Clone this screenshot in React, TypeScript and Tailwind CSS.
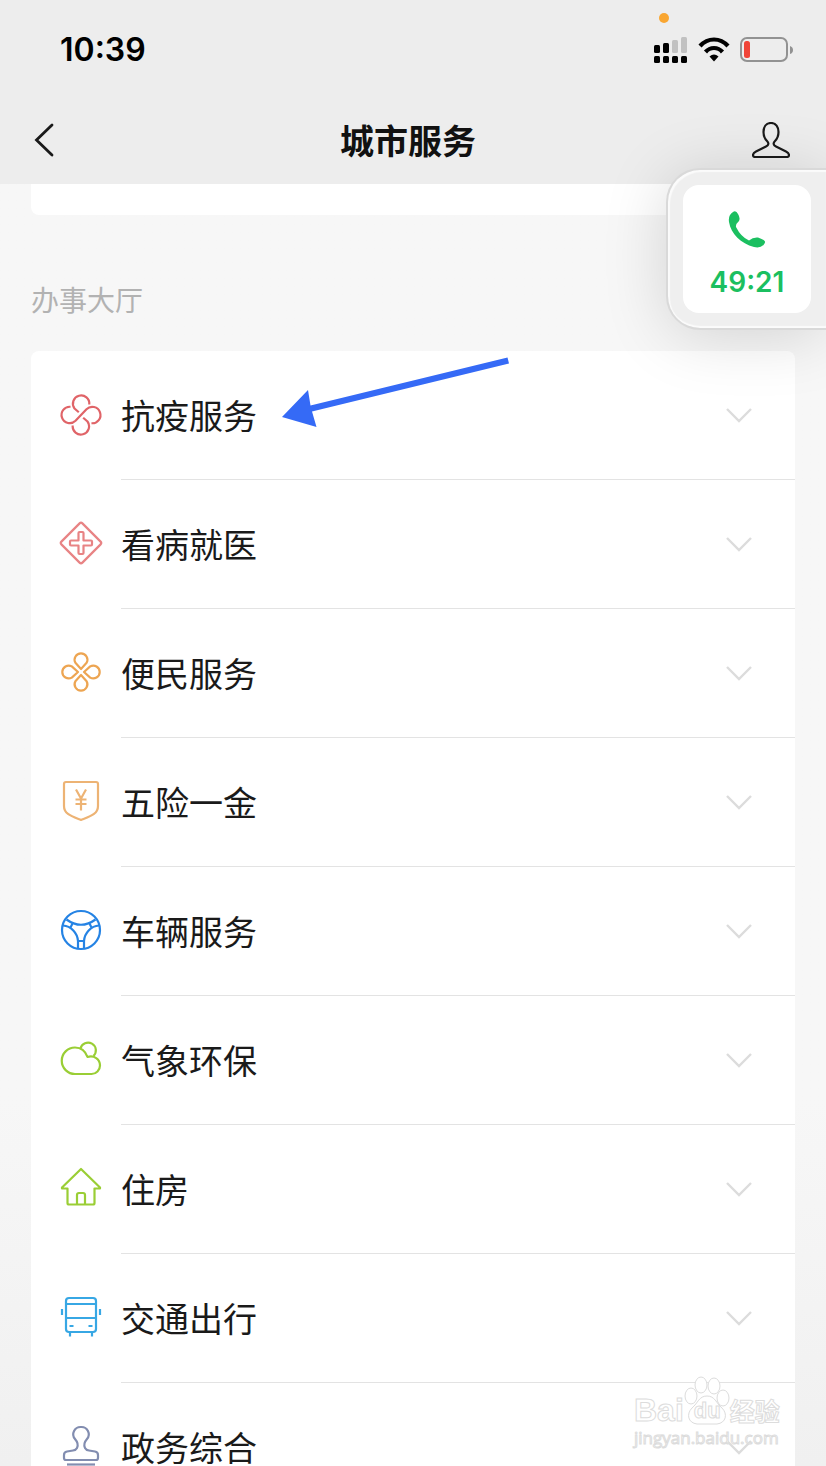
import type { ReactNode } from "react";

type Service = {
    name: string;
    color: string;
    icon: ReactNode;
};

const services: Service[] = [
    {
        name: "抗疫服务",
        color: "text-[#e06468]",
        icon: (
            <>
                <path d="M30.3 12.5A8.2 8.2 0 1 0 15.5 16.5L19.8 20.3" />
                <path d="M11.5 14.8A8.2 8.2 0 1 0 16.5 28.8L27.5 17.2A8.2 8.2 0 1 1 32.5 31.2" />
                <path d="M13.7 33.5A8.2 8.2 0 1 0 28.5 29.5L24.2 25.7" />
            </>
        ),
    },
    {
        name: "看病就医",
        color: "text-[#e88384]",
        icon: (
            <>
                <path d="M20.6 2.4Q22 1 23.4 2.4L41.6 20.6Q43 22 41.6 23.4L23.4 41.6Q22 43 20.6 41.6L2.4 23.4Q1 22 2.4 20.6Z" />
                <path d="M20.5 11h3q1 0 1 1v7.5h7.5q1 0 1 1v3q0 1-1 1h-7.5v7.5q0 1-1 1h-3q-1 0-1-1v-7.5h-7.5q-1 0-1-1v-3q0-1 1-1h7.5v-7.5q0-1 1-1Z" />
            </>
        ),
    },
    {
        name: "便民服务",
        color: "text-[#eda552]",
        icon: (
            <>
                <path d="M22 19L16.4 12.8A6.4 6.4 0 1 1 27.6 12.8Z" />
                <path d="M22 25L16.4 31.2A6.4 6.4 0 1 0 27.6 31.2Z" />
                <path d="M19 22L12.8 16.4A6.4 6.4 0 1 0 12.8 27.6Z" />
                <path d="M25 22L31.2 16.4A6.4 6.4 0 1 1 31.2 27.6Z" />
            </>
        ),
    },
    {
        name: "五险一金",
        color: "text-[#edb374]",
        icon: (
            <>
                <path d="M7 3H37Q39 3 39 5V27C39 35 32 37 22 41C12 37 5 35 5 27V5Q5 3 7 3Z" />
                <path d="M17 10.5L22 19.5L27 10.5M22 19.5V31.5M16.5 20.5H27.5M16.5 25H27.5" />
            </>
        ),
    },
    {
        name: "车辆服务",
        color: "text-[#2583e4]",
        icon: (
            <>
                <circle cx="22" cy="22" r="19" />
                <path d="M7.5 11.5Q22 22 36.5 11.5" />
                <path d="M4 17.5C12 18 18.5 25 19 33V40.5M40 17.5C32 18 25.5 25 25 33V40.5" />
                <path d="M14 14.5L11.5 19.5M30 14.5L32.5 19.5M19 33h6" />
            </>
        ),
    },
    {
        name: "气象环保",
        color: "text-[#9ace35]",
        icon: (
            <>
                <path d="M16 37H32.5A8.5 8.5 0 0 0 41 28.5C41 22 35 18 28.5 20C26 13 21 10.5 16 10.5A13.25 13.25 0 0 0 16 37Z" />
                <path d="M21.5 11.5A7.8 7.8 0 1 1 34.5 19" />
            </>
        ),
    },
    {
        name: "住房",
        color: "text-[#9ace35]",
        icon: (
            <>
                <path d="M22 3L41 21.5V22.5H35.5V37Q35.5 38.5 34 38.5H10Q8.5 38.5 8.5 37V22.5H3V21.5Z" />
                <path d="M18 38.5V29Q18 27 20 27H24Q26 27 26 29V38.5" />
            </>
        ),
    },
    {
        name: "交通出行",
        color: "text-[#37a7e4]",
        icon: (
            <>
                <rect x="7" y="3" width="30" height="34" rx="3" />
                <path d="M7 9h30M7 23h30M10.5 31h4M29.5 31h4M11 37v4.5M33 37v4.5M3 14v6M41 14v6" />
            </>
        ),
    },
    {
        name: "政务综合",
        color: "text-[#828db0]",
        icon: (
            <>
                <path d="M22 3A7.3 7.3 0 0 0 16 15C19 18.5 19 22 18 24Q17 26 14 26.5L8 27.5Q5 28 5 31V34Q5 36 7 36H37Q39 36 39 34V31Q39 28 36 27.5L30 26.5Q27 26 26 24C25 22 25 18.5 28 15A7.3 7.3 0 0 0 22 3Z" />
                <path d="M8 40.5H36" />
            </>
        ),
    },
];

function StatusBar() {
    return (
        <div className="relative flex h-[100px] items-center justify-between pl-[60px] pr-[33px]">
            <time className="font-['Inter'] text-[32px] font-semibold leading-10 text-black">10:39</time>
            <div className="flex items-center gap-2.5">
                <svg width="34" height="26" viewBox="0 0 34 26" aria-hidden="true">
                    <g fill="#c1c1c1">
                        <rect x="18" y="3" width="6" height="13" rx="1.5" />
                        <rect x="27" y="0" width="6" height="16" rx="1.5" />
                    </g>
                    <g fill="#000">
                        <rect x="0" y="8" width="6" height="8" rx="1.5" />
                        <rect x="9" y="6" width="6" height="10" rx="1.5" />
                        <rect x="0" y="19" width="6" height="7" rx="1.5" />
                        <rect x="9" y="19" width="6" height="7" rx="1.5" />
                        <rect x="18" y="19" width="6" height="7" rx="1.5" />
                        <rect x="27" y="19" width="6" height="7" rx="1.5" />
                    </g>
                </svg>
                <svg width="32" height="26" viewBox="0 0 32 26" fill="none" stroke="#000" strokeWidth="4.2" aria-hidden="true">
                    <path d="M2 9Q8 2.5 16 2.5T30 9" />
                    <path d="M7.5 15Q11 11 16 11T24.5 15" />
                    <path d="M11.5 19.5Q16 15.5 20.5 19.5L16 24.5Z" fill="#000" stroke="none" />
                </svg>
                <svg width="53" height="26" viewBox="0 0 53 26" aria-hidden="true">
                    <rect x="1" y="1" width="46" height="23" rx="6" fill="none" stroke="#929292" strokeWidth="2" />
                    <rect x="4" y="4" width="6" height="17" rx="2.5" fill="#f04438" />
                    <path d="M50 9Q53 10 53 13T50 17Z" fill="#929292" />
                </svg>
            </div>
            <span className="absolute right-[157px] top-[13px] size-[10px] rounded-full bg-[#f9a631]" />
        </div>
    );
}

function NavBar() {
    return (
        <div className="flex h-[84px] items-center justify-between pb-1 pl-8 pr-9">
            <button type="button" aria-label="返回">
                <svg width="32" height="36" viewBox="0 0 32 36" fill="none" stroke="#1a1a1a" strokeWidth="2.8" strokeLinecap="round">
                    <path d="M20 3L4.5 18L20 33" />
                </svg>
            </button>
            <h1 className="text-[34px] font-bold leading-10 text-[#111]">城市服务</h1>
            <button type="button" aria-label="我的">
                <svg width="38" height="36" viewBox="0 0 38 36" fill="none" stroke="#1a1a1a" strokeWidth="2.2" strokeLinejoin="round">
                    <path d="M19 1C14 1 11.5 5 11.5 10C11.5 14 13 17 15 19C17 21 17 23 14 24.5L4 29.5C2 30.5 1 31.5 1 33Q1 35 3 35H35Q37 35 37 33C37 31.5 36 30.5 34 29.5L24 24.5C21 23 21 21 23 19C25 17 26.5 14 26.5 10C26.5 5 24 1 19 1Z" />
                </svg>
            </button>
        </div>
    );
}

function ServiceRow({ name, color, icon }: Service) {
    return (
        <li>
            <button type="button" className="flex h-[129px] w-full items-start gap-[18px] pl-7 text-left">
                <svg
                    className={`mt-[41px] shrink-0 ${color}`}
                    width="44"
                    height="44"
                    viewBox="0 0 44 44"
                    fill="none"
                    stroke="currentColor"
                    strokeWidth="2.2"
                    strokeLinejoin="round"
                    aria-hidden="true"
                >
                    {icon}
                </svg>
                <span className="flex h-full flex-1 items-center justify-between border-b border-[#e3e3e3] pr-[42px]">
                    <span className="text-[34px] leading-9 text-[#1a1a1a]">{name}</span>
                    <svg width="28" height="16" viewBox="0 0 28 16" fill="none" stroke="#dcdcdc" strokeWidth="2.4" aria-hidden="true">
                        <path d="M2 2L14 14L26 2" />
                    </svg>
                </span>
            </button>
        </li>
    );
}

function PointerArrow() {
    return (
        <svg className="pointer-events-none absolute left-[250px] top-[5px]" width="230" height="74" viewBox="0 0 230 74" aria-hidden="true">
            <path d="M1 61L27 34L29.5 49.5L226.5 1.5L228 7.5L31 55.5L35.5 71Z" fill="#356af6" />
        </svg>
    );
}

function CallBubble() {
    return (
        <div className="absolute right-0 top-[168px] rounded-l-[34px] border-2 border-r-0 border-[#d9d9d9] bg-[#efefef] p-[15px] shadow-[0_6px_64px_rgba(0,0,0,0.15),inset_2px_2px_1px_#fbfbfb,inset_0_-2px_1px_#fbfbfb]">
            <button type="button" className="flex size-32 flex-col items-center rounded-[16px] bg-white pt-[26px]">
                <svg width="38" height="38" viewBox="0 0 38 38" fill="#1bbf60" aria-hidden="true">
                    <path d="M5 1Q8 -1 10 3Q12.5 7 11 10Q7.5 13 8 16Q13 26 21 29.5Q25 26 30 26.5Q36 28.5 37 30.5Q37.5 31.5 35.5 34Q32 37.5 26 36C13 32.5 3 23 1 11Q0 4 5 1Z" />
                </svg>
                <span className="mt-[13px] font-['Inter'] text-[28px] font-semibold leading-10 text-[#1bbf60]">49:21</span>
            </button>
        </div>
    );
}

function Watermark() {
    return (
        <div className="pointer-events-none absolute bottom-[16px] right-[44px] w-[148px] font-['Liberation_Sans'] font-bold text-white [-webkit-text-stroke:1px_#dcdcdc]">
            <div className="flex items-end">
                <span className="text-[32px] leading-8">Bai</span>
                <span className="relative">
                    <svg width="46" height="50" viewBox="0 0 46 50" fill="#fff" stroke="#dcdcdc" aria-hidden="true">
                        <ellipse cx="7" cy="20" rx="6" ry="8" />
                        <ellipse cx="17" cy="9" rx="6" ry="8" />
                        <ellipse cx="30" cy="10" rx="6" ry="8" />
                        <ellipse cx="39" cy="22" rx="6" ry="8" />
                        <path d="M23 20C15 20 14 27 8 32C2 38 4 47 13 48H33C42 47 44 38 38 32C32 27 31 20 23 20Z" />
                    </svg>
                    <span className="absolute left-[10px] top-[23px] text-[22px] leading-6">du</span>
                </span>
                <span className="font-['Noto_Sans_CJK_SC'] text-[25px] leading-8">经验</span>
            </div>
            <div className="font-['Open_Sans'] text-[17px] font-normal leading-6">jingyan.baidu.com</div>
        </div>
    );
}

export default function App() {
    return (
        <main className="relative flex h-screen flex-col overflow-hidden bg-linear-to-b from-[#f7f7f7] from-75% to-[#f0f0f0] font-['Noto_Sans_CJK_SC',sans-serif]">
            <header className="shrink-0 bg-[#ededed]">
                <StatusBar />
                <NavBar />
            </header>

            <div className="min-h-0 flex-1 overflow-hidden px-[31px]">
                <div className="h-[31px] rounded-b-lg bg-white" />
                <h2 className="mb-8 mt-16 text-[28px] leading-10 text-[#b2b2b2]">办事大厅</h2>
                <div className="relative rounded-t-lg bg-white">
                    <ul>
                        {services.map((service) => (
                            <ServiceRow key={service.name} {...service} />
                        ))}
                    </ul>
                    <PointerArrow />
                </div>
            </div>

            <CallBubble />
            <Watermark />
        </main>
    );
}
